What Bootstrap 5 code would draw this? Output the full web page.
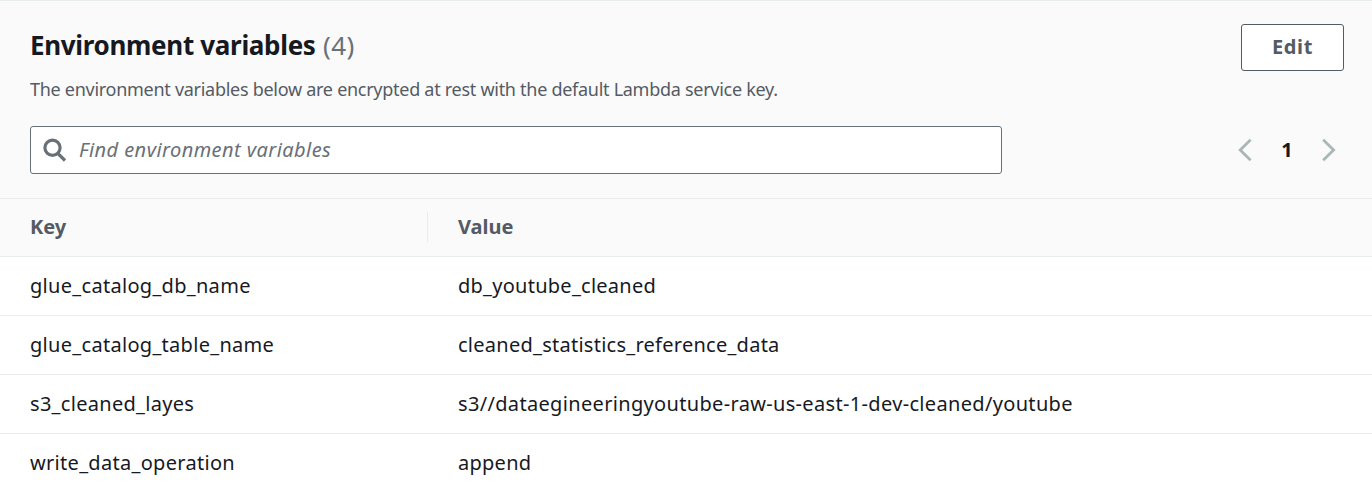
<!DOCTYPE html>
<html lang="en">
<head>
<meta charset="utf-8">
<meta name="viewport" content="width=device-width, initial-scale=1">
<title>Environment variables</title>
<link href="https://cdn.jsdelivr.net/npm/bootstrap@5.3.0/dist/css/bootstrap.min.css" rel="stylesheet">
<style>
  body { font-family: "Noto Sans", sans-serif; font-size: 20px; line-height: 30px; color: #16191f; background: #fff; overflow: hidden; }
  .panel-head { background: #fafafa; border-top: 1px solid #eaeded; border-bottom: 1px solid #eaeded; height: 199px; padding: 23px 28px 0 30px; }
  .panel-title { font-size: 26px; line-height: 36px; font-weight: 700; letter-spacing: -.32px; margin: 3px 0 0; }
  .panel-title .counter { font-weight: 400; color: #687078; letter-spacing: .4px; margin-left: 1px; }
  .panel-desc { font-size: 18px; line-height: 28px; color: #545b64; letter-spacing: -.28px; margin: 12px 0 0; }
  .btn-edit { width: 103px; height: 47px; padding: 0 0 2px; font-size: 20px; font-weight: 700; letter-spacing: .65px; line-height: 43px; color: #545b64; background: #fff; border: 1px solid #545b64; border-radius: 3px; }
  .search-row { margin-top: 23px; }
  .search-box { width: 972px; height: 48px; background: #fff; border: 1px solid #687078; border-radius: 3px; padding-left: 12px; }
  .search-box .form-control { font-size: 20px; line-height: 30px; letter-spacing: .43px; padding: 0 0 0 12px; color: #16191f; }
  .search-box .form-control::placeholder { color: #687078; font-style: italic; opacity: 1; }
  .pager { margin-right: 8px; }
  .pager .page-now { width: 70px; text-align: center; font-weight: 700; line-height: 30px; }
  .var-table { --bs-table-color: #16191f; --bs-table-bg: #fff; table-layout: fixed; border-collapse: separate; border-spacing: 0; }
  .var-table > :not(caption) > * > * { padding: 0 0 0 30px; height: 59px; border-bottom: 1px solid #eaeded; vertical-align: middle; letter-spacing: .3px; white-space: nowrap; }
  .var-table > :not(caption) > * > * + * { letter-spacing: .26px; }
  .var-table > tbody > tr:nth-child(3) > * + * { letter-spacing: .33px; }
  .var-table > thead > tr > th { height: 58px; padding-bottom: 1px; background: #fafafa; color: #545b64; font-weight: 700; letter-spacing: 0; }
  .var-table > thead > tr > th + th { letter-spacing: 0; }
  .var-table > tbody > tr:last-child > td { border-bottom-color: transparent; }
  .col-key { width: 428px; }
  .key-head { height: 30px; border-right: 1px solid #eaeded; }
</style>
</head>
<body>
<section>
  <header class="panel-head">
    <div class="d-flex justify-content-between align-items-start">
      <div>
        <h2 class="panel-title">Environment variables <span class="counter">(4)</span></h2>
        <p class="panel-desc">The environment variables below are encrypted at rest with the default Lambda service key.</p>
      </div>
      <button class="btn btn-edit" type="button">Edit</button>
    </div>
    <div class="search-row d-flex justify-content-between align-items-center">
      <div class="search-box d-flex align-items-center">
        <svg class="flex-shrink-0" width="24" height="24" viewBox="0 0 24 24" fill="none" stroke="#687078" stroke-width="3.2"><circle cx="9.5" cy="9.8" r="7.6"/><path d="M14.8 15.3L22 22.5"/></svg>
        <input class="form-control border-0 bg-transparent shadow-none" type="text" placeholder="Find environment variables" aria-label="Find environment variables">
      </div>
      <nav class="pager d-flex align-items-center" aria-label="Pagination">
        <svg width="14" height="24" viewBox="0 0 14 24" fill="none" stroke="#aab7b8" stroke-width="2.8"><path d="M12.6 1.8L2.2 12L12.6 22.2"/></svg>
        <span class="page-now">1</span>
        <svg width="14" height="24" viewBox="0 0 14 24" fill="none" stroke="#aab7b8" stroke-width="2.8"><path d="M1.2 1.8L11.6 12L1.2 22.2"/></svg>
      </nav>
    </div>
  </header>
  <table class="table var-table mb-0">
    <colgroup><col class="col-key"><col></colgroup>
    <thead>
      <tr><th scope="col"><div class="key-head">Key</div></th><th scope="col">Value</th></tr>
    </thead>
    <tbody>
      <tr><td>glue_catalog_db_name</td><td>db_youtube_cleaned</td></tr>
      <tr><td>glue_catalog_table_name</td><td>cleaned_statistics_reference_data</td></tr>
      <tr><td>s3_cleaned_layes</td><td>s3//dataegineeringyoutube-raw-us-east-1-dev-cleaned/youtube</td></tr>
      <tr><td>write_data_operation</td><td>append</td></tr>
    </tbody>
  </table>
</section>
<script src="https://cdn.jsdelivr.net/npm/bootstrap@5.3.0/dist/js/bootstrap.bundle.min.js"></script>
</body>
</html>
